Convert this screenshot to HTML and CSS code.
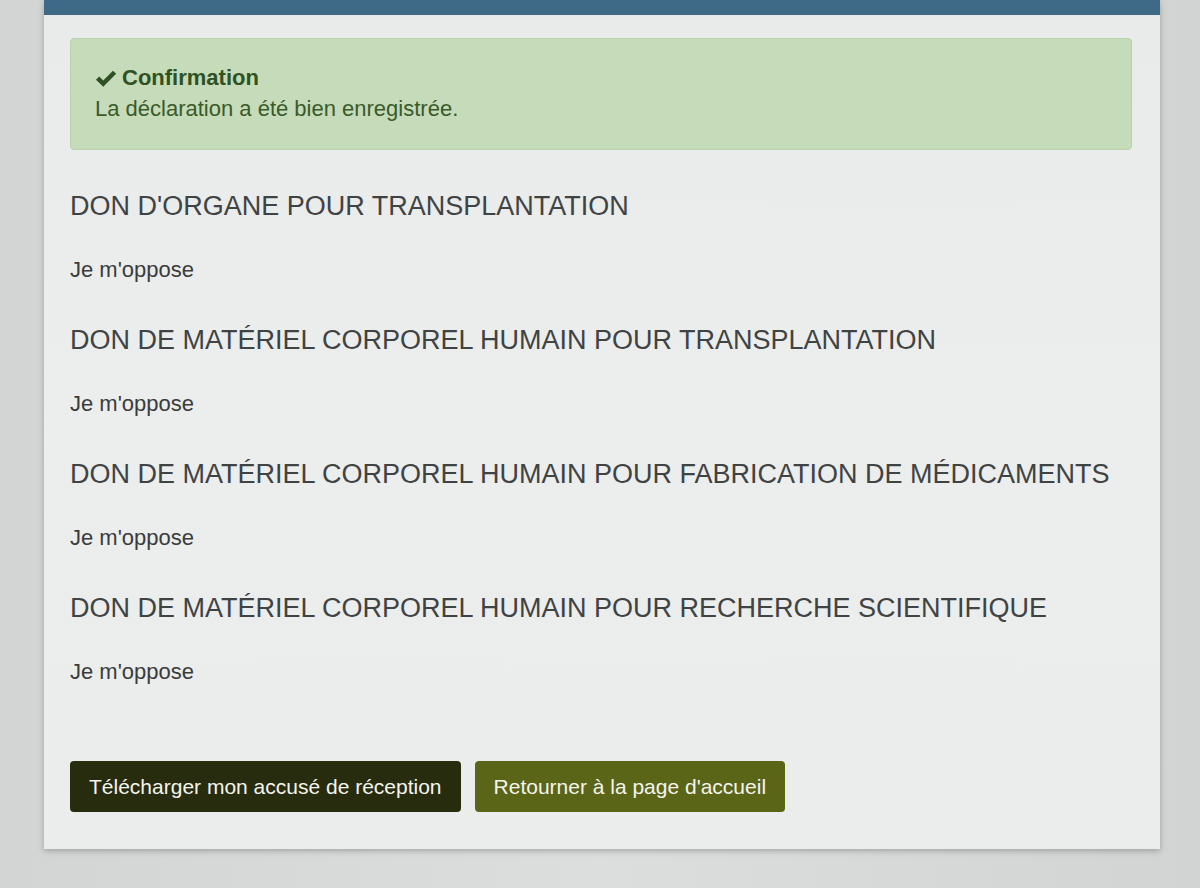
FILE: index.html
```html
<!DOCTYPE html>
<html lang="fr">
<head>
<meta charset="utf-8">
<link rel="stylesheet" href="styles.css">
</head>
<body>
<div class="page">
  <div class="card">
    <div class="card-top"></div>
    <div class="card-body">
      <div class="alert">
        <div class="alert-title"><svg class="check" viewBox="0 0 20 18" width="22" height="19"><path d="M0.5 10.2 L3.6 7.2 L7.4 11 L16.6 1.6 L19.6 4.6 L7.4 16.8 Z" fill="#2f5224"/></svg>Confirmation</div>
        <div class="alert-text">La déclaration a été bien enregistrée.</div>
      </div>
      <div class="section">
        <h2>DON D'ORGANE POUR TRANSPLANTATION</h2>
        <p>Je m'oppose</p>
      </div>
      <div class="section">
        <h2>DON DE MATÉRIEL CORPOREL HUMAIN POUR TRANSPLANTATION</h2>
        <p>Je m'oppose</p>
      </div>
      <div class="section">
        <h2>DON DE MATÉRIEL CORPOREL HUMAIN POUR FABRICATION DE MÉDICAMENTS</h2>
        <p>Je m'oppose</p>
      </div>
      <div class="section">
        <h2>DON DE MATÉRIEL CORPOREL HUMAIN POUR RECHERCHE SCIENTIFIQUE</h2>
        <p>Je m'oppose</p>
      </div>
      <div class="actions">
        <button class="btn btn-dark">Télécharger mon accusé de réception</button>
        <button class="btn btn-olive">Retourner à la page d'accueil</button>
      </div>
    </div>
  </div>
</div>
</body>
</html>
```

FILE: styles.css
```css
html, body {
  margin: 0;
  padding: 0;
}
body {
  background: linear-gradient(90deg, #d3d5d5 0%, #dcdede 50%, #d2d4d4 100%);
  font-family: "Liberation Sans", Arial, sans-serif;
  height: 888px;
  overflow: hidden;
}
.page {
  padding-left: 44px;
}
.card {
  width: 1116px;
  background: linear-gradient(180deg, #e9eaea 0%, #eceded 50%, #ebecec 100%);
  box-shadow: 0 2px 6px rgba(0,0,0,0.25);
}
.card-top {
  height: 15px;
  background: #3e6a87;
}
.card-body {
  padding: 23px 28px 37px 26px;
}
.alert {
  background: #c5dbb9;
  border: 1px solid #b8d2ab;
  border-radius: 4px;
  padding: 26px 24px 26px 24px;
  color: #3a5a2a;
  height: 58px;
}
.alert-title {
  display: flex;
  align-items: center;
  gap: 5px;
  font-weight: bold;
  font-size: 22px;
  line-height: 26px;
  color: #2f5224;
}
.check {
  display: block;
}
.alert-text {
  font-size: 22px;
  line-height: 28px;
  margin-top: 4px;
}
.section h2 {
  font-weight: normal;
  font-size: 27px;
  line-height: 30px;
  color: #404343;
  margin: 41px 0 0 0;
}
.section:first-of-type h2 {
  margin-top: 38px;
}
.section p {
  font-size: 22px;
  line-height: 28px;
  color: #3a3c3c;
  margin: 35px 0 0 0;
}
.actions {
  display: flex;
  gap: 14px;
  margin-top: 75px;
}
.btn {
  font-family: "Liberation Sans", Arial, sans-serif;
  font-size: 21px;
  color: #f4f4ee;
  border: none;
  border-radius: 4px;
  height: 51px;
  padding: 0 19px;
}
.btn-dark {
  background: #272c0e;
}
.btn-olive {
  background: #5b6517;
}
```
